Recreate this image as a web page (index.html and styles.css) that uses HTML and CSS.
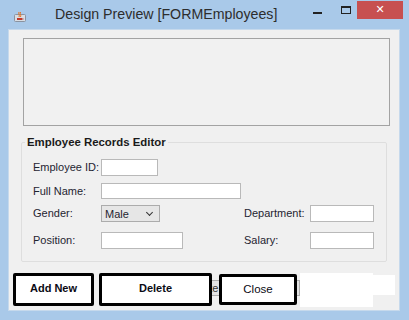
FILE: index.html
```html
<!DOCTYPE html>
<html>

	<head>
		<meta charset="UTF-8">
		<title>Design Preview [FORMEmployees]</title>
		<link rel="stylesheet" href="styles.css">
	</head>

	<body>
		<div id="window">
			<div id="titleBar">
				<span class="appIcon">
					<svg width="12" height="13" viewBox="0 0 12 13">
						<rect x="0.5" y="5.5" width="11" height="7" rx="1" fill="#d9dde3" stroke="#8a93a0"/>
						<path d="M3 9h5v2H3z" fill="#c0392b"/>
						<path d="M8 9.5h1.5v1H8z" fill="#c0392b"/>
						<path d="M5 8c1-2-1-3 0-5M6.5 8c1-2-1-3 0-5" stroke="#e8731d" stroke-width="1" fill="none"/>
					</svg>
				</span>
				<span class="caption">Design Preview [FORMEmployees]</span>
				<span class="ctrl minBtn"><i></i></span>
				<span class="ctrl maxBtn"><i></i></span>
				<span class="ctrl closeBtn">&#x2715;</span>
			</div>
			<div id="client">
				<div class="panel"></div>
				<fieldset class="group">
					<legend>Employee Records Editor</legend>
					<div class="formGrid">
						<label class="lbl">Employee ID:</label>
						<span class="field fId"></span>
						<span></span><span></span>

						<label class="lbl">Full Name:</label>
						<span class="field fName"></span>
						<span></span><span></span>

						<label class="lbl">Gender:</label>
						<span class="combo">Male<i class="chev"></i></span>
						<label class="lbl">Department:</label>
						<span class="field fSmall"></span>

						<label class="lbl">Position:</label>
						<span class="field fPos"></span>
						<label class="lbl">Salary:</label>
						<span class="field fSmall"></span>
					</div>
				</fieldset>
				<div class="btnRow">
					<span class="ghostBtn">Update</span>
					<a class="btn btnAdd" href="javascript:;">Add New</a>
					<a class="btn btnDel" href="javascript:;">Delete</a>
					<a class="btn btnClose" href="javascript:;">Close</a>
					<span class="blank"></span>
					<span class="blankTail"></span>
				</div>
			</div>
		</div>
	</body>

</html>
```

FILE: styles.css
```css
html,
body {
	margin: 0;
	padding: 0;
}

body {
	background: #a9c9e9;
	font-family: "Liberation Sans", Arial, sans-serif;
}

#window {
	width: 409px;
	height: 320px;
	box-sizing: border-box;
	padding: 0 9px 9px 8px;
	background: #a9c9e9;
	display: flex;
	flex-direction: column;
	overflow: hidden;
}

#titleBar {
	height: 29px;
	display: flex;
	align-items: flex-start;
	flex-shrink: 0;
}

.appIcon {
	margin: 8px 0 0 6px;
	width: 12px;
	height: 13px;
}

.caption {
	margin: 5px 0 0 29px;
	font-size: 14.2px;
	line-height: 18px;
	color: #2d2d2d;
	flex: 1;
}

.ctrl {
	display: block;
}

.minBtn {
	width: 9px;
	height: 2px;
	margin-top: 12px;
	background: #222;
}

.maxBtn {
	width: 10px;
	height: 8px;
	margin: 6px 0 0 19px;
	box-sizing: border-box;
	border: 1px solid #222;
	border-top-width: 2px;
}

.closeBtn {
	width: 46px;
	height: 18px;
	margin: 1px -3px 0 6px;
	background: #c75050;
	color: #fff;
	font: bold 11px/18px "DejaVu Sans", sans-serif;
	text-align: center;
}

#client {
	flex: 1;
	background: #f0f0f0;
	border: 1px solid #c6d9ec;
	position: relative;
}

.panel {
	margin: 8px 0 0 14px;
	width: 367px;
	height: 88px;
	box-sizing: border-box;
	border: 1px solid #a3a3a3;
	background: #f1f1f1;
}

.group {
	margin: 9px 0 0 12px;
	width: 366px;
	box-sizing: border-box;
	border: 1px solid #dedede;
	border-radius: 2px;
	padding: 0 0 12px 3px;
}

.group legend {
	padding: 0 2px;
	font: bold 11.4px/14px "Liberation Sans", Arial, sans-serif;
	color: #1a1a1a;
}

.formGrid {
	margin: 10px 0 0 8px;
	display: grid;
	grid-template-columns: 68px 143px 66px 64px;
	grid-template-rows: 24px 22px 27px 17px;
	align-items: start;
}

.lbl {
	font-size: 11px;
	line-height: 17px;
	color: #1f2430;
}

.field {
	display: block;
	height: 17px;
	box-sizing: border-box;
	background: #fff;
	border: 1px solid #b9b9b9;
}

.fId {
	width: 57px;
}

.fName {
	width: 140px;
	height: 16px;
}

.fPos {
	width: 82px;
}

.fSmall {
	width: 64px;
}

.combo {
	display: flex;
	align-items: center;
	width: 59px;
	height: 17px;
	box-sizing: border-box;
	border: 1px solid #acacac;
	background: #e6e6e6;
	padding-left: 3px;
	font-size: 11px;
	color: #1f2430;
}

.chev {
	margin-left: 18px;
	width: 4px;
	height: 4px;
	border-right: 1.5px solid #333;
	border-bottom: 1.5px solid #333;
	transform: rotate(45deg);
	margin-top: -2px;
}

.btnRow {
	margin: 11px 0 0 4px;
	display: flex;
	align-items: flex-start;
	position: relative;
}

a {
	text-decoration: none;
	color: #000;
}

.btn {
	position: relative;
	z-index: 1;
	display: flex;
	align-items: center;
	justify-content: center;
	box-sizing: border-box;
	background: #fff;
	border: 3px solid #000;
	border-radius: 2px;
	height: 33px;
	padding-bottom: 4px;
	font: bold 11px "Liberation Sans", Arial, sans-serif;
	color: #0a0a14;
}

.btnAdd {
	width: 81px;
}

.btnDel {
	width: 113px;
	margin-left: 5px;
}

.btnClose {
	width: 78px;
	height: 31px;
	margin: 1px 0 0 7px;
	padding-bottom: 1px;
	font-weight: normal;
	font-size: 11.5px;
}

.ghostBtn {
	position: absolute;
	left: 157px;
	top: 7px;
	width: 130px;
	height: 16px;
	box-sizing: border-box;
	border: 1px solid #adadad;
	background: #e3e3e3;
	padding-left: 12px;
	font-size: 11px;
	line-height: 14px;
	color: #333;
}

.blank {
	position: relative;
	z-index: 1;
	width: 73px;
	height: 34px;
	margin-left: 3px;
	background: #fff;
}

.blankTail {
	width: 22px;
	height: 20px;
	margin-top: 2px;
	background: #fff;
}
```
